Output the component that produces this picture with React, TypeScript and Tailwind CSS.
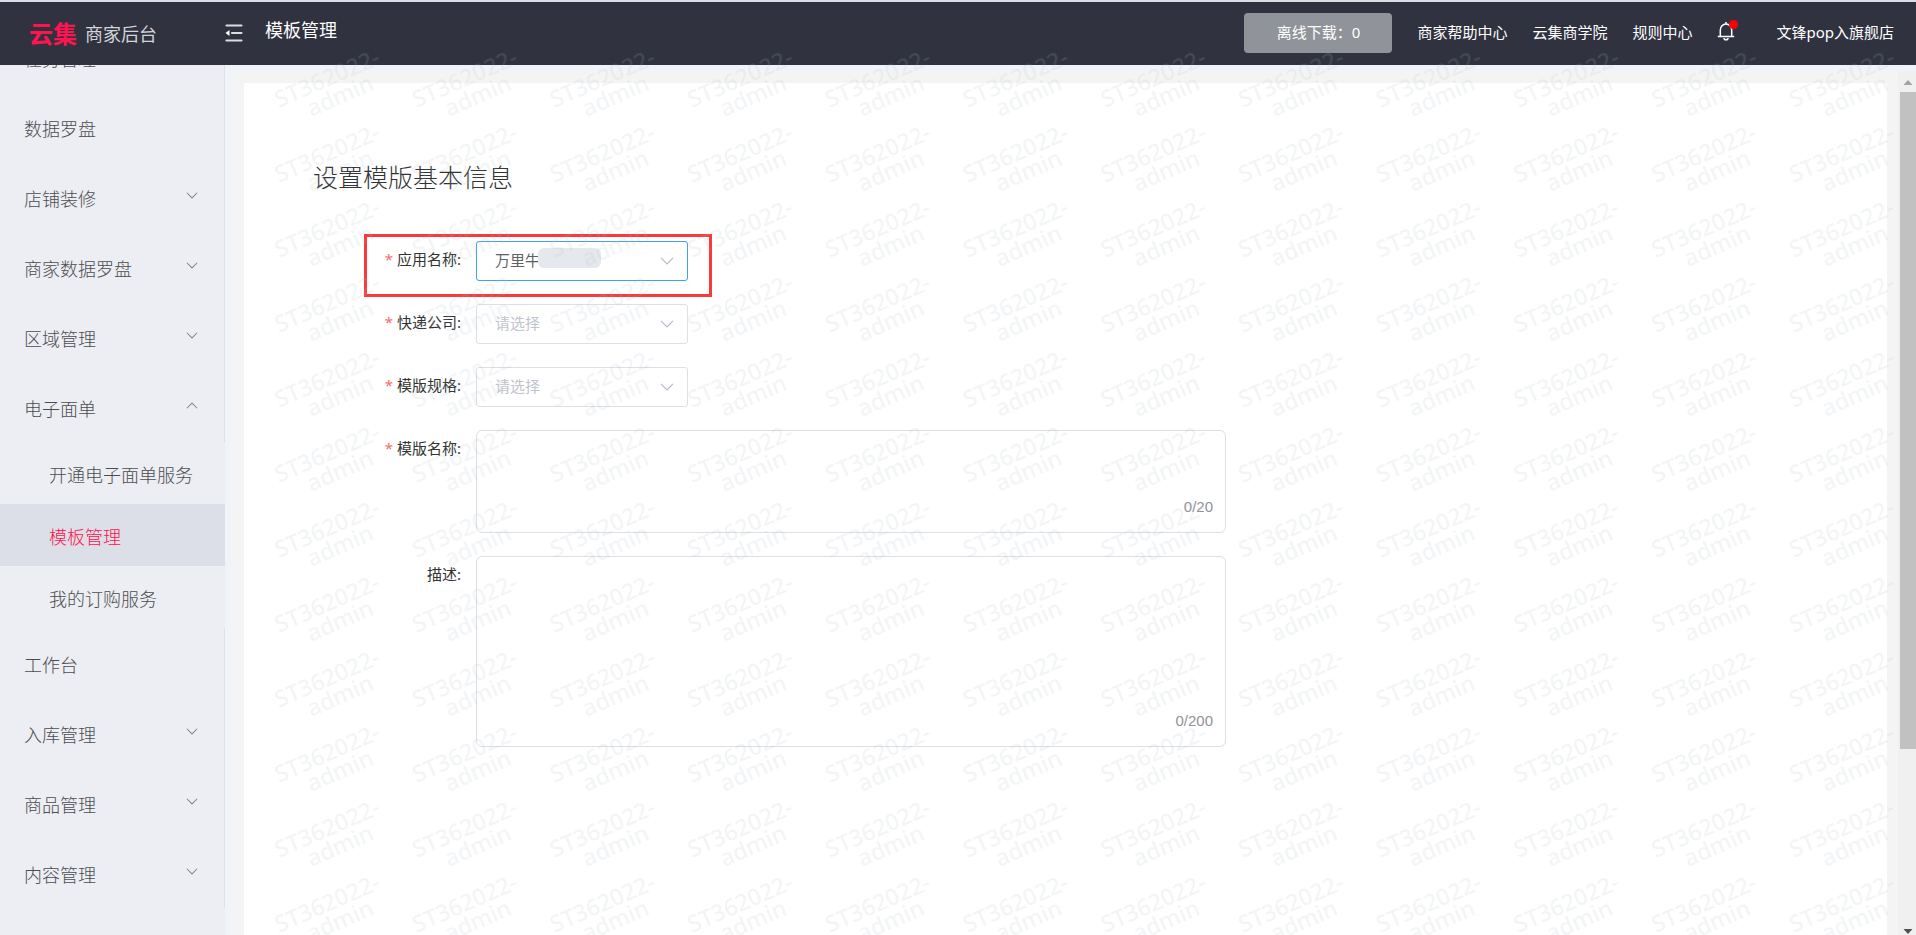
import { useState } from "react";
import clsx from "clsx";

interface MenuItem {
  title: string;
  expandable?: boolean;
  children?: string[];
}

const menu: MenuItem[] = [
  { title: "任务管理" },
  { title: "数据罗盘" },
  { title: "店铺装修", expandable: true },
  { title: "商家数据罗盘", expandable: true },
  { title: "区域管理", expandable: true },
  {
    title: "电子面单",
    expandable: true,
    children: ["开通电子面单服务", "模板管理", "我的订购服务"],
  },
  { title: "工作台" },
  { title: "入库管理", expandable: true },
  { title: "商品管理", expandable: true },
  { title: "内容管理", expandable: true },
];

const links = ["商家帮助中心", "云集商学院", "规则中心"];

function Chevron({ className }: { className?: string }) {
  return (
    <svg viewBox="0 0 14 8" fill="none" stroke="currentColor" className={className} aria-hidden="true">
      <path d="M1 .8 7 6.800l6-6" strokeWidth="1.200" />
    </svg>
  );
}

function FoldIcon() {
  return (
    <svg viewBox="0 0 18 20" className="h-5 w-[18px]" aria-hidden="true">
      <path d="M1.500 2.500h15M7 10h9.500M1.500 17.500h15" stroke="#dcdde0" strokeWidth="2.200" strokeLinecap="round" />
      <path d="M.5 10 4.500 7v6z" fill="#fff" />
    </svg>
  );
}

function BellIcon() {
  return (
    <svg viewBox="0 0 18 20" className="h-5 w-[18px]" fill="none" stroke="#fff" strokeWidth="1.500" aria-hidden="true">
      <path d="M3.300 15.200V9a5.700 6 0 0 1 11.400 0v6.200M.8 15.600h16.400M9 3V1" />
      <path d="M7 17a2 1.800 0 0 0 4 0" />
    </svg>
  );
}

function Header() {
  return (
    <header className="flex h-[65px] shrink-0 items-center border-t-2 border-[#dcdfe6] bg-[#303240] text-white">
      <div className="flex w-[225px] shrink-0 items-center gap-2 pl-[29px]">
        <span className="text-2xl font-bold text-[#ff1450]">云集</span>
        <span className="text-lg text-[#d3d4d9]">商家后台</span>
      </div>
      <button type="button" aria-label="收起菜单" className="pb-0.5">
        <FoldIcon />
      </button>
      <h1 className="pb-2 pl-[22px] text-lg">模板管理</h1>
      <nav className="ml-auto flex items-center gap-[25px] pr-[22px] pb-0.5 text-[15px]">
        <button type="button" className="h-10 w-[148px] rounded bg-[#909399]">
          离线下载：0
        </button>
        {links.map((link) => (
          <a key={link} href="#">
            {link}
          </a>
        ))}
        <button type="button" aria-label="消息" className="relative mr-4 pb-1">
          <BellIcon />
          <span className="absolute -top-px -right-[3px] size-[9px] rounded-full bg-[#ff0000]" />
        </button>
        <a href="#">文锋pop入旗舰店</a>
      </nav>
    </header>
  );
}

function Sidebar() {
  return (
    <aside className="w-[225px] shrink-0 overflow-hidden bg-[#eceef3] text-lg font-light text-[#4c4d50]">
      {/* list is scrolled down a little, the first row is half hidden */}
      <ul className="-mt-[43px]">
        {menu.map((item) => (
          <li key={item.title}>
            <a href="#" className="flex h-[70px] items-center justify-between border-r border-[#dfe1e6] pt-1 pr-[26px] pl-6">
              {item.title}
              {item.expandable && (
                <Chevron
                  className={clsx("mb-2 h-[7px] w-3 text-[#85878c]", item.children && "rotate-180")}
                />
              )}
            </a>
            {item.children && (
              <ul>
                {item.children.map((child) => (
                  <li key={child}>
                    <a
                      href="#"
                      className={clsx(
                        "flex h-[62px] items-center pt-1 pl-[49px]",
                        child === "模板管理" && "bg-[#dcdfe7] text-[#ff0f4b]"
                      )}
                    >
                      {child}
                    </a>
                  </li>
                ))}
              </ul>
            )}
          </li>
        ))}
      </ul>
    </aside>
  );
}

function Label({ id, text, required }: { id: string; text: string; required?: boolean }) {
  return (
    <label htmlFor={id} className="flex h-10 w-[163px] shrink-0 items-center justify-end pr-[15px] pb-1 text-[15px] text-[#333]">
      {required && <span className="mr-1 text-[#f56c6c]">*</span>}
      {text}:
    </label>
  );
}

interface SelectFieldProps {
  id: string;
  label: string;
  value?: string;
}

function SelectField({ id, label, value }: SelectFieldProps) {
  return (
    <div className="flex">
      <Label id={id} text={label} required />
      <div className="relative">
        <select
          id={id}
          defaultValue={value ?? ""}
          className={clsx(
            "h-10 w-[212px] appearance-none rounded-[3px] border bg-white pb-0.5 pl-[18px] text-[15px] outline-none",
            value ? "border-[#409eff] text-[#606266]" : "border-[#dcdfe6] text-[#c0c4cc]"
          )}
        >
          <option value="">请选择</option>
          {value && <option value={value}>{value}</option>}
        </select>
        {value && <span className="absolute top-[7px] left-[62px] h-5 w-[63px] rounded-md bg-[#e5e8ec]" />}
        <Chevron className="pointer-events-none absolute top-4 right-3.5 h-2 w-3.5 text-[#b4bccc]" />
      </div>
    </div>
  );
}

interface TextFieldProps {
  id: string;
  label: string;
  max: number;
  required?: boolean;
  tall?: boolean;
}

function TextField({ id, label, max, required, tall }: TextFieldProps) {
  const [text, setText] = useState("");
  return (
    <div className="flex">
      <Label id={id} text={label} required={required} />
      <div className="relative flex w-[750px]">
        <textarea
          id={id}
          value={text}
          maxLength={max}
          onChange={(e) => setText(e.target.value)}
          className={clsx(
            "w-full resize-none rounded-md border border-[#dcdfe6] bg-white px-[18px] py-2 text-[15px] outline-none",
            tall ? "h-[191px]" : "h-[103px]"
          )}
        />
        <span className="absolute right-[13px] bottom-[15px] font-['Liberation_Sans',sans-serif] text-[15px] text-[#909399]">
          {text.length}/{max}
        </span>
      </div>
    </div>
  );
}

function Watermark() {
  return (
    <svg
      className="pointer-events-none absolute top-12 right-[18px] bottom-0 left-[260px] h-[calc(100%-48px)] w-[calc(100%-278px)]"
      aria-hidden="true"
    >
      <defs>
        <pattern id="watermark" width="137.700" height="75" patternUnits="userSpaceOnUse">
          <g
            transform="translate(19 60) rotate(-23.500)"
            fill="#b0bccb"
            fillOpacity="0.160"
            fontSize="23"
            fontWeight="500"
            fontFamily="'Noto Sans', sans-serif"
          >
            <text>ST362022-</text>
            <text x="26" y="21">admin</text>
          </g>
        </pattern>
      </defs>
      <rect width="100%" height="100%" fill="url(#watermark)" />
    </svg>
  );
}

function Scrollbar() {
  return (
    <div className="flex w-[18px] shrink-0 flex-col items-end bg-[#f0f0f0]" aria-hidden="true">
      <svg viewBox="0 0 16 21" className="h-[21px] w-4 shrink-0">
        <path d="M3.500 14 8 9l4.500 5z" fill="#a3a3a3" />
      </svg>
      <div className="h-[76%] w-4 bg-[#c1c1c1]" />
      <svg viewBox="0 0 16 6" className="mt-auto h-1.5 w-4 shrink-0">
        <path d="M3.500 0h9L8 5z" fill="#505050" />
      </svg>
    </div>
  );
}

export default function App() {
  return (
    <div className="relative flex h-screen flex-col overflow-hidden bg-[#f4f4f4] font-['Noto_Sans','Noto_Sans_CJK_SC',sans-serif]">
      <Header />
      <div className="flex min-h-0 flex-1">
        <Sidebar />
        <div className="flex min-w-0 flex-1 border-t-[6px] border-l-[6px] border-[#f0f4f9]">
          <main className="min-w-0 flex-1 overflow-hidden pt-3 pr-[11px] pl-[13px]">
            <section className="min-h-full bg-white px-[69px] pt-[76px] pb-24">
              <h2 className="text-[25px] leading-9 font-light text-[#333]">设置模版基本信息</h2>
              <form className="relative mt-[46px] flex flex-col gap-[23px]">
                <SelectField id="app" label="应用名称" value="万里牛" />
                <SelectField id="express" label="快递公司" />
                <SelectField id="spec" label="模版规格" />
                <TextField id="name" label="模版名称" max={20} required />
                <TextField id="desc" label="描述" max={200} tall />
                <div className="pointer-events-none absolute -top-[7px] left-[51px] h-[63px] w-[348px] border-3 border-[#fc3838]" />
              </form>
            </section>
          </main>
          <Scrollbar />
        </div>
      </div>
      <Watermark />
    </div>
  );
}
